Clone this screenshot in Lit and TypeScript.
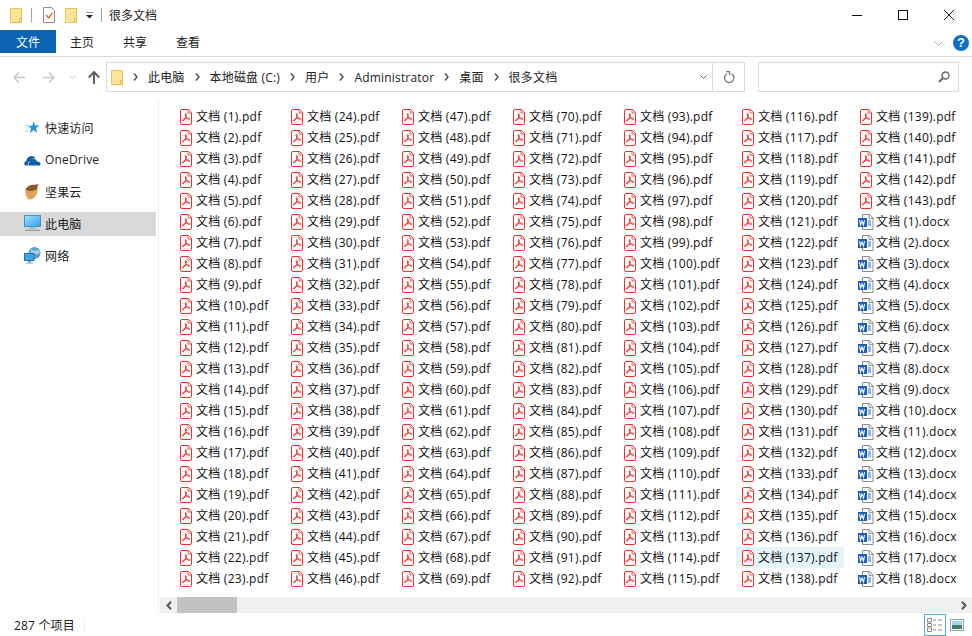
import { LitElement, html, css, svg } from "lit";
import { customElement } from "lit/decorators.js";

const folder = svg`<svg width="12" height="15" viewBox="0 0 12 15"><path d="M.5.5h11v14H.5z" fill="#fde49a" stroke="#e8c35a"/><path d="M9.500 10.500v4h2v-4z" fill="#fff3c8" stroke="#e0b848"/></svg>`;

const pdf = svg`<svg class="ficon" width="12" height="16" viewBox="0 0 12 16"><path d="M2 .5h6.500l3 3v10.500a1.500 1.500 0 0 1-1.500 1.500h-8a1.500 1.500 0 0 1-1.500-1.500v-12a1.500 1.500 0 0 1 1.500-1.500z" fill="#fff" stroke="#f0302c"/><path d="M8 .5v3.500h3.500" fill="none" stroke="#f0302c" stroke-width=".8"/><path d="M5.700 4.500c-.9 0-.4 2 .3 3.300.8 1.400 2.600 3 3.500 2.600.7-.5-.3-1.500-2-1.500-1.700 0-4.300 1-5 2.300-.4.900.6 1 1.400.1 1-1.100 2.300-3.800 2.400-5.500 0-.7-.2-1.300-.6-1.300z" fill="none" stroke="#f0302c" stroke-width="1"/></svg>`;

const word = svg`<svg class="ficon word" width="16" height="16" viewBox="0 0 16 16"><path d="M4.500.500h7l3.500 3.500v11.500h-10.500z" fill="#fff" stroke="#8a8a8a"/><path d="M11 .5v3.800h4" fill="none" stroke="#8a8a8a"/><path d="M10 7h3M10 9h3M10 11h3" stroke="#2b6fc4"/><rect x="0" y="4" width="9" height="9" fill="#1b5fb4"/><path d="M1.500 6l1 5 1.500-4 1.500 4 1-5" fill="none" stroke="#fff" stroke-width="1.100"/></svg>`;

const star = svg`<svg width="16" height="16" viewBox="0 0 16 16"><path d="M9.500 1l1.500 4.500h4.500l-3.600 2.800 1.400 4.700-3.800-2.900-3.800 2.900 1.400-4.700-3.400-2.600h4.700z" fill="#1f8fe0"/><path d="M1 5h4M2 8h3M1 11h3" stroke="#9fd0f0"/></svg>`;
const cloud = svg`<svg width="17" height="12" viewBox="0 0 17 12"><path d="M1 11.500c-1.400-1.500-.8-4 1.300-4.500.4-2.800 2.400-5 5.200-5 1.800 0 3.300 1 4 2.200-2.200-.4-4.300 1-4.800 3.300-1.800 0-3 1-3 2.500 0 .6.200 1.100.5 1.500z" fill="#0f5ca8"/><path d="M5 11.500c-1.400-1.300-.6-3.300 1.200-3.300.3-2.200 2-3.400 3.800-3.200 1.600.1 2.800 1.300 3 2.600 1.800-.2 3.500 1.200 3.500 2.500 0 .6-.3 1-.6 1.400z" fill="#0f5ca8"/></svg>`;
const acorn = svg`<svg width="17" height="16" viewBox="0 0 17 16"><path d="M1 8c0-2 1-3.500 2-4.500 3 1.500 7 1.500 9.500 0 1 1.500 1 3.500 .5 5.500-.8 3.500-3.500 6-6.500 6.500-3 .3-5.500-3.500-5.500-7.500z" fill="#dfa356"/><path d="M3 5c-1.500 2-1.500 5 0 8 .8 1.300 2 2 3.500 2.500-3 .4-5-2-5.400-5.500-.3-2 .4-4 1.900-5z" fill="#f2d59b"/><path d="M1.800 5.500c1-3 4.500-5 9-4.700 1-.4 2.500-.6 4-.5-.3.900-1 1.600-1.500 2 .6 1 .5 2 0 2.700-3.500 2.500-8.500 2.800-11.500.5z" fill="#8a5a2a"/></svg>`;
const monitor = svg`<svg width="17" height="17" viewBox="0 0 17 17"><defs><linearGradient id="scr" x1="0" y1="0" x2="1" y2="1"><stop offset="0" stop-color="#a4e0ff"/><stop offset="1" stop-color="#2f9ff0"/></linearGradient></defs><rect x=".5" y=".5" width="16" height="11" fill="url(#scr)" stroke="#4d8dc0"/><rect x="5.500" y="12" width="6" height="2" fill="#a9bccb"/><rect x="1" y="14.500" width="15" height="1.500" fill="#8fa6b8"/></svg>`;
const network = svg`<svg width="17" height="17" viewBox="0 0 17 17"><circle cx="10.500" cy="6" r="6" fill="#5da0d0"/><path d="M7 2c2 2 5 2 8 1l1 3c-3 2-6 1-9 1z" fill="#a9cfe8"/><rect x=".5" y="6.500" width="9.500" height="7" fill="#3ea4e8" stroke="#2a6f9f"/><rect x="4" y="14" width="3" height="1.500" fill="#7fa0b8"/><rect x="2" y="15.500" width="7" height="1" fill="#7fa0b8"/></svg>`;

const chev = svg`<svg class="crumb-sep" width="5" height="8" viewBox="0 0 5 8"><path d="M1 .5l3 3.500-3 3.500" fill="none" stroke="#555" stroke-width="1.500"/></svg>`;

interface FileItem { name: string; type: "pdf" | "word"; hover?: boolean }

function buildFiles(): FileItem[] {
  const items: FileItem[] = [];
  for (let i = 1; i <= 143; i++) items.push({ name: `文档 (${i}).pdf`, type: "pdf", hover: i === 137 });
  for (let i = 1; i <= 18; i++) items.push({ name: `文档 (${i}).docx`, type: "word" });
  return items;
}

const nav = [
  { label: "快速访问", icon: star },
  { label: "OneDrive", icon: cloud },
  { label: "坚果云", icon: acorn },
  { label: "此电脑", icon: monitor, active: true },
  { label: "网络", icon: network },
];

const crumbs = ["此电脑", "本地磁盘 (C:)", "用户", "Administrator", "桌面", "很多文档"];

@customElement("app-root")
export class AppRoot extends LitElement {
  static styles = css`
    :host {
      display: flex;
      flex-direction: column;
      width: 972px;
      height: 636px;
      background: #fff;
      overflow: hidden;
      font-family: "Open Sans", "Noto Sans CJK SC", sans-serif;
      font-size: 12px;
      letter-spacing: .18px;
      color: #000;
    }
    .title { height: 30px; display: flex; align-items: center; flex: none; }
    .qa { display: flex; align-items: center; padding-left: 10px; }
    .qa .vsep { width: 1px; height: 14px; background: #a0a0a0; }
    .qa svg { display: block; }
    .s1 { margin: 0 11px 0 9px; }
    .s3 { margin-left: 8px; margin-right: 7px; }
    .qfolder { margin-left: 10px; }
    .qarrow { margin-left: 9px; }
    .wintitle { color: #222; letter-spacing: 0; }
    .spacer { flex: 1; }
    .win { display: flex; align-items: center; }
    .win button { width: 46px; height: 30px; padding: 0; border: 0; background: none; display: flex; align-items: center; justify-content: center; }
    .win svg { display: block; }

    .ribbon { height: 26px; display: flex; flex: none; border-bottom: 1px solid #dadada; box-sizing: content-box; }
    .tab { height: 23px; line-height: 25px; color: #222; letter-spacing: 0; }
    .tab.main-tab { width: 56px; text-align: center; background: #0a63b3; color: #fff; }
    .tab.t { width: 52px; padding-right: 1px; text-align: center; }
    .ribbon .help { display: flex; align-items: center; gap: 10px; padding: 0 3px 0 0; height: 24px; margin-top: 1px; }
    .helpdot { width: 16px; height: 16px; border-radius: 50%; background: #0f6fc6; color: #fff; font: bold 13px/16px "Liberation Sans", sans-serif; text-align: center; }

    .addr { height: 43px; display: flex; align-items: center; flex: none; padding-bottom: 3px; box-sizing: border-box; }
    .navs { width: 106px; display: flex; position: relative; height: 30px; align-items: center; padding-left: 13px; box-sizing: border-box; flex: none; }
    .navs svg { display: block; }
    .navs .n2 { margin-left: 18px; }
    .navs .n3 { margin-left: 14px; }
    .navs .n4 { margin-left: 12px; }
    .box { height: 30px; box-sizing: border-box; border: 1px solid #d9d9d9; display: flex; align-items: center; }
    .pathbox { width: 639px; padding-left: 4px; }
    .crumbs { display: flex; align-items: center; flex: 1; color: #222; }
    .crumbs svg { display: block; flex: none; }
    .crumb-sep { margin: 0 10px; }
    .refresh { width: 31px; height: 28px; border-left: 1px solid #d9d9d9; display: flex; align-items: center; justify-content: center; }
    .dd { margin-right: 5px; }
    .search { width: 201px; margin-left: 13px; justify-content: flex-end; padding-right: 8px; }

    .main { flex: 1; display: flex; min-height: 0; }
    .side { width: 158px; flex: none; border-right: 1px solid #f0f0f0; padding-top: 16px; box-sizing: content-box; }
    .nav { width: 156px; height: 24px; margin-bottom: 8px; display: flex; align-items: center; padding: 0 0 1px 24px; box-sizing: border-box; color: #222; }
    .nav.active { background: #d9d9d9; }
    .nav .ic { width: 21px; flex: none; display: flex; align-items: center; }
    .nav svg { display: block; }

    .content { flex: 1; min-width: 0; display: flex; flex-direction: column; }
    .files {
      flex: 1; min-height: 0; padding: 6px 0 0 15px; box-sizing: border-box;
      display: grid; grid-auto-flow: column;
      grid-template-rows: repeat(23, 21px);
      grid-template-columns: 111px 111px 111px 111px 118px 118px 118px;
    }
    .file { display: flex; align-items: center; padding-left: 6px; white-space: nowrap; width: 108px; box-sizing: border-box; color: #111; letter-spacing: .25px; }
    .file.hover { background: #e5f3fb; }
    .file .ficon { display: block; flex: none; margin-right: 4px; margin-top: 1px; }
    .file .word { margin-left: -2px; margin-right: 2px; }
    .file span { line-height: 21px; }

    .hbar { height: 16px; background: #f0f0f0; display: flex; align-items: center; flex: none; margin-left: 1px; position: relative; }
    .hbar .cell { width: 17px; height: 16px; display: flex; align-items: center; justify-content: center; flex: none; }
    .hbar .thumb { width: 60px; height: 16px; background: #c2c2c2; flex: none; }
    .status { height: 23px; flex: none; display: flex; align-items: center; padding-left: 14px; color: #222; }
    .status .div { width: 1px; height: 14px; background: #f0f0f0; margin-left: 9px; }
    .views { display: flex; align-items: center; padding-right: 8px; }
    .vbtn { width: 22px; height: 22px; box-sizing: border-box; border: 1px solid #56a8dc; display: flex; align-items: center; justify-content: center; }
    .vbtn svg, .thumbs svg { display: block; }
    .thumbs { margin-left: 4px; }
  `;

  render() {
    return html`
      <div class="title">
        <div class="qa">
          ${folder}
          <div class="vsep s1"></div>
          <svg width="12" height="16" viewBox="0 0 12 16"><path d="M.5.5h8l3 3v12h-11z" fill="#fff" stroke="#8f8f8f"/><path d="M3 8l2.500 3 4-5" fill="none" stroke="#e8622c" stroke-width="1.300"/></svg>
          <span class="qfolder">${folder}</span>
          <svg class="qarrow" width="7" height="7" viewBox="0 0 7 7"><path d="M0 0h7" stroke="#222"/><path d="M0 3h7l-3.500 3.500z" fill="#222"/></svg>
          <div class="vsep s3"></div>
        </div>
        <div class="wintitle">很多文档</div>
        <div class="spacer"></div>
        <div class="win">
          <button><svg width="10" height="1"><rect width="10" height="1" fill="#111"/></svg></button>
          <button><svg width="10" height="10" viewBox="0 0 10 10"><rect x=".5" y=".5" width="9" height="9" fill="none" stroke="#111"/></svg></button>
          <button><svg width="10" height="10" viewBox="0 0 10 10"><path d="M0 0l10 10M10 0L0 10" stroke="#111"/></svg></button>
        </div>
      </div>

      <div class="ribbon">
        <div class="tab main-tab">文件</div>
        <div class="tab t">主页</div>
        <div class="tab t">共享</div>
        <div class="tab t">查看</div>
        <div class="spacer"></div>
        <div class="help">
          <svg width="9" height="5" viewBox="0 0 9 5"><path d="M.5.500l4 4 4-4" fill="none" stroke="#aaa"/></svg>
          <div class="helpdot">?</div>
        </div>
      </div>

      <div class="addr">
        <div class="navs">
          <svg width="12" height="11" viewBox="0 0 12 11"><path d="M6 .5L1 5.500l5 5M1 5.500h11" fill="none" stroke="#c8c8c8" stroke-width="1.500"/></svg>
          <svg class="n2" width="12" height="11" viewBox="0 0 12 11"><path d="M6 .5l5 5-5 5M11 5.500H0" fill="none" stroke="#c8c8c8" stroke-width="1.500"/></svg>
          <svg class="n3" width="7" height="4" viewBox="0 0 7 4"><path d="M.5.500l3 3 3-3" fill="none" stroke="#c8c8c8"/></svg>
          <svg class="n4" width="12" height="13" viewBox="0 0 12 13"><path d="M.8 6.500L6 1l5.200 5.500M6 1v12" fill="none" stroke="#5f5f5f" stroke-width="2"/></svg>
        </div>
        <div class="box pathbox">
          <div class="crumbs">
            ${folder}${crumbs.map((c) => html`${chev}<span>${c}</span>`)}
          </div>
          <svg class="dd" width="7" height="4" viewBox="0 0 7 4"><path d="M.5.500l3 3 3-3" fill="none" stroke="#666"/></svg>
          <div class="refresh">
            <svg width="12" height="13" viewBox="0 0 12 13"><path d="M4 2.700a4.700 4.700 0 1 0 4.500 0" fill="none" stroke="#777" stroke-width="1.300"/><path d="M3 .5h3.500v3.500" fill="none" stroke="#777" stroke-width="1.300"/></svg>
          </div>
        </div>
        <div class="box search">
          <svg width="12" height="12" viewBox="0 0 12 12"><circle cx="7.500" cy="4.500" r="3.500" fill="none" stroke="#666" stroke-width="1.400"/><path d="M5 7l-4 4" stroke="#666" stroke-width="2"/></svg>
        </div>
      </div>

      <div class="main">
        <div class="side">
          ${nav.map((n) => html`<div class="nav ${n.active ? "active" : ""}"><span class="ic">${n.icon}</span><span>${n.label}</span></div>`)}
        </div>
        <div class="content">
          <div class="files">
            ${buildFiles().map((f) => html`<div class="file ${f.hover ? "hover" : ""}">${f.type === "pdf" ? pdf : word}<span>${f.name}</span></div>`)}
          </div>
          <div class="hbar">
            <div class="cell"><svg width="6" height="9" viewBox="0 0 6 9"><path d="M5 .8L1.500 4.500 5 8.200" fill="none" stroke="#555" stroke-width="2"/></svg></div>
            <div class="thumb"></div>
            <div class="spacer"></div>
            <div class="cell"><svg width="6" height="9" viewBox="0 0 6 9"><path d="M1 .8l3.500 3.700L1 8.200" fill="none" stroke="#555" stroke-width="2"/></svg></div>
          </div>
        </div>
      </div>

      <div class="status">
        <span>287 个项目</span><div class="div"></div>
        <div class="spacer"></div>
        <div class="views">
          <div class="vbtn"><svg width="16" height="14" viewBox="0 0 16 14"><path d="M.5.500h4v3.500h-4zM.5 5.500h4v3h-4zM.5 10h4v3.500h-4z" fill="#fff" stroke="#888"/><path d="M6 2h3M11 2h4M6 7h3M11 7h4M6 12h3M11 12h4" stroke="#888"/></svg></div>
          <div class="thumbs"><svg width="14" height="12" viewBox="0 0 14 12"><rect x=".5" y=".5" width="13" height="11" fill="#fff" stroke="#7fa8c8"/><rect x="2" y="2" width="10" height="4" fill="#a8d8f0"/><rect x="2" y="6" width="10" height="4" fill="#4f7a5a"/></svg></div>
        </div>
      </div>
    `;
  }
}
